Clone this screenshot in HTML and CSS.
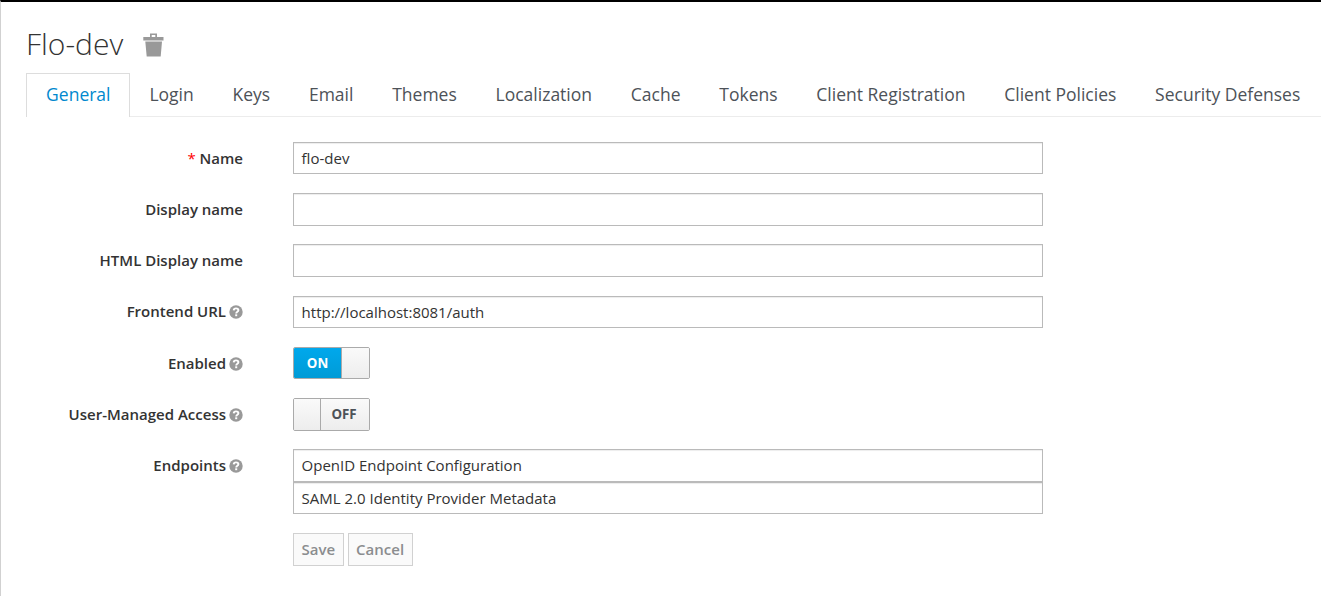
FILE: index.html
```html
<!DOCTYPE html>
<html lang="en">
<head>
<meta charset="utf-8">
<title>Flo-dev</title>
<link rel="stylesheet" href="styles.css">
</head>
<body>
<svg width="0" height="0" class="defs"><symbol id="help" viewBox="0 0 14 14"><circle cx="7" cy="7" r="6.7" fill="#999"/><path d="M4.7 5.4C4.8 3.9 5.7 3.4 7 3.4c1.400 0 2.400.7 2.400 1.800C9.400 6.700 7.200 6.700 7.200 8.400" fill="none" stroke="#fff" stroke-width="1.900"/><path d="M6.200 9.300h2v1.900h-2z" fill="#fff"/></symbol></svg>
<main class="page">
<h1 class="title"><span>Flo-dev</span><svg class="trash" width="21" height="24" viewBox="0 0 21 24"><path fill="#999" fill-rule="evenodd" d="M7 0.500h7V4h6.500v3.500H.3V4H7zM8.700 2v2h3.600V2zM2.300 8.500h16.700l-1.300 15H3.700z"/></svg></h1>
<nav class="tabs">
<a class="tab active">General</a><a class="tab">Login</a><a class="tab">Keys</a><a class="tab">Email</a><a class="tab">Themes</a><a class="tab">Localization</a><a class="tab">Cache</a><a class="tab">Tokens</a><a class="tab">Client Registration</a><a class="tab">Client Policies</a><a class="tab">Security Defenses</a>
</nav>
<form class="form">
<div class="row"><label class="label"><span class="req">*</span> Name</label><div class="control">flo-dev</div></div>
<div class="row"><label class="label">Display name</label><div class="control"></div></div>
<div class="row"><label class="label">HTML Display name</label><div class="control"></div></div>
<div class="row"><label class="label label-url">Frontend URL<svg class="help"><use href="#help"/></svg></label><div class="control">http://localhost:8081/auth</div></div>
<div class="row"><label class="label">Enabled<svg class="help"><use href="#help"/></svg></label><div class="switch"><span class="on">ON</span><span class="knob knob-right"></span></div></div>
<div class="row"><label class="label">User-Managed Access<svg class="help"><use href="#help"/></svg></label><div class="switch"><span class="knob knob-left"></span><span class="off">OFF</span></div></div>
<div class="row endpoints"><label class="label">Endpoints<svg class="help"><use href="#help"/></svg></label><div class="stack"><div class="control">OpenID Endpoint Configuration</div><div class="control">SAML 2.0 Identity Provider Metadata</div></div></div>
<div class="actions"><button type="button" class="btn">Save</button><button type="button" class="btn">Cancel</button></div>
</form>
</main>
</body>
</html>
```
FILE: styles.css
```css
*{box-sizing:border-box}
body{margin:0;background:#fff;color:#333;font-family:"Open Sans",sans-serif;font-size:15px}
.defs{display:block}
.page{height:596px;overflow:hidden;border-top:2px solid #000;border-left:1px solid #d1d1d1;padding:21px 0 0 25px}
.title{display:flex;align-items:center;gap:20px;margin:0;height:41px;font-size:30px;font-weight:300;line-height:41px}
.trash{margin-top:3px}
.tabs{display:flex;margin-top:9px;height:44px;border-bottom:1px solid #ececec;white-space:nowrap}
.tab{height:43px;padding:0 19.400px;line-height:42px;font-size:17.5px;color:#4d5258}
.active{height:44px;padding:0 18.500px 0 19.100px;border:1px solid #ddd;border-bottom:0;background:#fff;color:#0088ce;line-height:40px}
.form{display:flex;flex-direction:column;padding-top:25px;gap:18.79px}
.row{display:flex;height:32.43px}
.label{width:217px;margin-right:50px;text-align:right;line-height:32px;font-weight:600;white-space:nowrap}
.label-url{line-height:31px}
.req{color:#f00;font-weight:400}
.help{width:14px;height:14px;margin-left:3px;vertical-align:-2px}
.control{width:750px;height:32.43px;padding:0 7.600px;border:1px solid #bababa;line-height:31px;box-shadow:inset 0 1px 1px rgba(0,0,0,.075)}
.endpoints{height:64.86px}
.switch{display:flex;width:77px;height:32.43px;border:1px solid #aaa;border-radius:2px;overflow:hidden;line-height:30px;font-size:13.3px;font-weight:700;text-align:center}
.row:nth-child(6) .switch{height:33px}
.on{width:47px;background:linear-gradient(#00a8ec,#009bd6);color:#fff}
.off{width:48px;padding-right:2px;background:linear-gradient(#fafafa,#ededed);color:#4d5258}
.knob{width:28px;background:linear-gradient(#fafafa,#ededed)}
.knob-left{border-right:1px solid #aaa;width:27px}
.knob-right{border-left:1px solid #aaa}
.actions{display:flex;gap:4px;padding-left:267px}
.btn{height:33px;padding:0 7.500px;border:1px solid #d1d1d1;background:#fafafa;color:#8b8d8f;font:600 15px/29px "Open Sans",sans-serif}
```
